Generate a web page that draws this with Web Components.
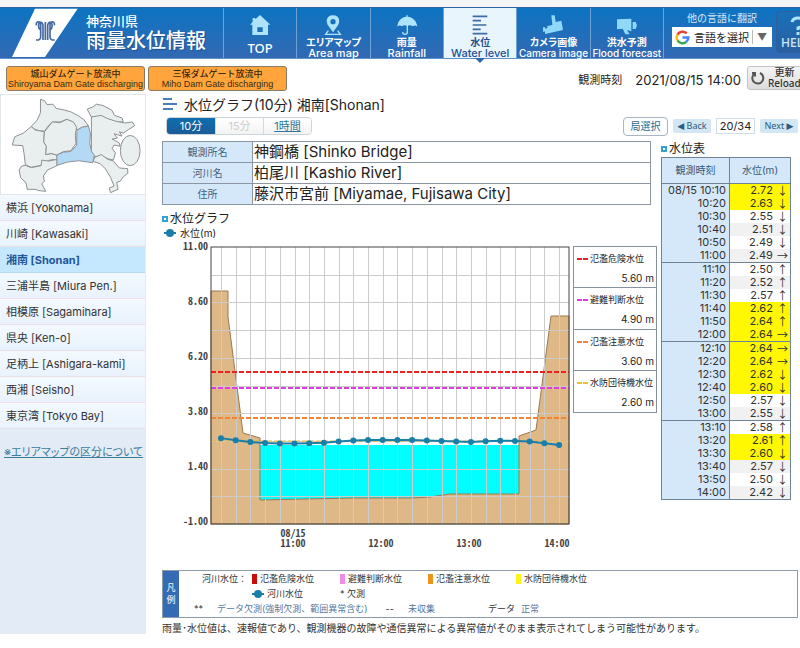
<!DOCTYPE html>
<html lang="ja">
<head>
<meta charset="utf-8">
<meta name="viewport" content="width=device-width, initial-scale=1">
<title>神奈川県 雨量水位情報</title>
<style>
  body { margin: 0; background: #fff; color: #222; font-family: Inter, "Noto Sans CJK JP", sans-serif; font-size: 11px; overflow-x: hidden; }
</style>
</head>
<body>
<river-app></river-app>

<script>
const define = (name, html, init) => {
  const tpl = document.createElement('template');
  tpl.innerHTML = html;
  customElements.define(name, class extends HTMLElement {
    connectedCallback() {
      if (this.shadowRoot) return;
      this.attachShadow({ mode: 'open' }).append(tpl.content.cloneNode(true));
      if (init) init(this, this.shadowRoot);
    }
  });
};

/* One tab of the main navigation */
define('nav-tab', `
<style>
  :host { display: block; border-left: 1px solid #6fa3d6; position: relative; min-width: 0; }
  :host([active]) { background: #e9f5fd; }
  a { display: flex; flex-direction: column; align-items: center; height: 100%; box-sizing: border-box; padding-top: 6px; color: #fff; text-decoration: none; white-space: nowrap; font-weight: 500; }
  :host([active]) a { color: #24508f; }
  .ja { font-size: 10px; line-height: 12px; font-feature-settings: "palt"; font-weight: 700; }
  .en { font-size: 11px; line-height: 10px; }
  :host([plain]) .ja { display: none; }
  :host([plain]) .en { font-size: 13px; line-height: 16px; margin-top: 4px; font-family: "Noto Sans", sans-serif; }
  :host([small]) .en { font-size: 10px; }
  .arrow { display: none; position: absolute; left: 50%; top: 100%; margin-left: -5px; border: 5px solid transparent; border-top-color: #2e67ab; border-bottom: 0; }
  :host([active]) .arrow { display: block; }
</style>
<a href="#"><slot name="icon"></slot><span class="ja"><slot name="ja"></slot></span><span class="en"><slot></slot></span></a>
<i class="arrow"></i>`);

define('site-header', `
<style>
  :host { display: flex; height: 52px; margin-top: 7px; box-sizing: border-box; border-top: 1px solid #28649e; border-bottom: 1px solid #5d93cd; background: linear-gradient(#0c74c2, #3369b3); color: #fff; box-shadow: 0 -7px #f6f6f6; }
  .brand { flex: 0 0 223px; display: flex; gap: 8px; align-items: center; }
  .brand > svg { flex: none; margin-left: 12px; }
  .brand small { display: block; font-size: 13px; line-height: 16px; font-weight: 500; }
  .brand b { display: block; font-size: 20px; line-height: 25px; font-weight: 500; text-shadow: 1px 1px 1px #204f8c; white-space: nowrap; }
  nav { flex: 0 0 440px; display: grid; grid-template-columns: repeat(6, minmax(0, 1fr)); }
  nav svg { width: 24px; height: 22px; display: block; }
  .lang { flex: 0 0 100px; border-left: 1px solid #6fa3d6; padding: 3px 4px 0 8px; font-size: 10px; text-align: center; }
  .lang label { display: block; line-height: 15px; color: #d9eafa; padding-right: 0; }
  .pick { display: flex; align-items: center; height: 20px; background: #fff; margin-top: 1px; padding: 0 3px; position: relative; }
  .pick svg { flex: none; }
  select { appearance: none; flex: 1; min-width: 0; border: 0; background: none; font: 11px "Noto Sans CJK JP", sans-serif; color: #222; padding: 0 0 0 4px; height: 20px; }
  .tri { border-left: 1px solid #bbb; padding: 0 2px 0 4px; line-height: 14px; color: #666; font-size: 10px; }
  .help { flex: 0 0 74px; margin: 3px 0 5px; border: 1px solid #2b5f9d; border-radius: 4px; background: linear-gradient(#1a6fb9, #2a5f9f); color: #cfe8fb; padding: 0; font: 500 12px/14px "Noto Sans", sans-serif; }
  .help svg { display: block; margin: 1px 0 0 13px; }
  .help span { display: block; text-align: left; padding-left: 4px; }
</style>
<div class="brand">
  <svg width="66" height="50" viewBox="38 26 198 150"><path d="M107 28H235L137 173H38Z" fill="#fff"/>
    <g fill="none" stroke="#4568a3" stroke-width="5"><path d="M111 78C108 66 124 63 124 76V112Q124 123 110 122M165 78C168 66 152 63 152 76V112Q152 123 166 122M131 122V80C131 64 115 66 118 82C119 94 126 91 124 88M145 122V80C145 64 161 66 158 82C157 94 150 91 152 88M138 68V122"/></g></svg>
  <div><small>神奈川県</small><b>雨量水位情報</b></div>
</div>
<nav>
  <nav-tab plain><svg slot="icon" viewBox="743 44 72 66"><path fill="#aee4fb" fill-rule="evenodd" d="M779 47L810 76H803V107H756V76H749L757 68V56H765V60ZM771 84V98H787V84Z"/></svg>TOP</nav-tab>
  <nav-tab><svg slot="icon" viewBox="93 44 72 66"><path fill="#aee4fb" fill-rule="evenodd" d="M129 48C151 48 151 70 142 81L129 99L116 81C107 70 107 48 129 48ZM129 59A8 8 0 1 0 129 75A8 8 0 1 0 129 59Z"/><path fill="none" stroke="#aee4fb" stroke-width="4" d="M115 94L107 105H151L143 94"/></svg><span slot="ja">エリアマップ</span>Area map</nav-tab>
  <nav-tab><svg slot="icon" viewBox="313 44 72 66"><path fill="#aee4fb" d="M347 48H351V52C368 53 378 66 380 82Q374 75 366 81Q358 75 350 81Q342 75 334 81Q326 75 320 82C321 66 331 53 347 52Z"/><path fill="none" stroke="#aee4fb" stroke-width="4" d="M350 78V99Q350 105 343 105Q336 105 336 98"/></svg><span slot="ja">雨量</span>Rainfall</nav-tab>
  <nav-tab active><svg slot="icon" viewBox="531 44 72 66"><path stroke="#3d6ba5" stroke-width="5" d="M545 51H589M545 64H570M545 77H586M545 90H569M545 103H589"/></svg><span slot="ja">水位</span>Water level</nav-tab>
  <nav-tab small><svg slot="icon" viewBox="9 44 72 66"><path fill="#8fd8fa" d="M40 48H50L53 68L70 64L75 92L22 104L20 96L15 98V84L20 83L22 88L28 86V80L43 77Z"/></svg><span slot="ja">カメラ画像</span>Camera image</nav-tab>
  <nav-tab small><svg slot="icon" viewBox="226 44 72 66"><path fill="#8fd8fa" d="M232 60L275 58V96L262 92L270 105H257L249 88L232 90ZM279 68H288L292 78L288 89H279Z"/></svg><span slot="ja">洪水予測</span>Flood forecast</nav-tab>
</nav>
<div class="lang">
  <label for="lang">他の言語に翻訳</label>
  <div class="pick">
    <svg width="15" height="15" viewBox="0 0 18 18"><g fill="none" stroke-width="3"><path stroke="#ea4335" d="M3 5.5A7 7 0 0 1 14 4"/><path stroke="#fbbc05" d="M3 12.5A7 7 0 0 1 3 5.5"/><path stroke="#34a853" d="M13.500 14.300A7 7 0 0 1 3 12.500"/><path stroke="#4285f4" d="M9 9H16A7 7 0 0 1 13.500 14.300"/></g></svg>
    <select id="lang"><option>言語を選択</option></select><span class="tri">▼</span>
  </div>
</div>
<button class="help"><svg width="18" height="20" viewBox="0 0 18 20"><path d="M2 6Q3 2 8 2Q14 2 14 7Q14 10 8 12V14M8 16V19" fill="none" stroke="#aee4fb" stroke-width="3"/></svg><span>HELP</span></button>`);

define('status-bar', `
<style>
  :host { display: flex; height: 35px; padding: 7px 0 0 6px; box-sizing: border-box; gap: 3px; align-items: flex-start; overflow: hidden; }
  a { flex: 0 0 139px; min-width: 0; height: 25px; box-sizing: border-box; border: 1px solid #8b7a63; border-radius: 3px; background: #ffa53c; color: #3b2a10; text-decoration: none; text-align: center; font: 500 9px/11px "Noto Sans CJK JP", sans-serif; padding-top: 1px; white-space: nowrap; }
  a span { display: block; font-family: "Liberation Sans", sans-serif; line-height: 10px; }
  .time { margin-left: auto; display: flex; gap: 13px; line-height: 28px; font-size: 11px; white-space: nowrap; }
  time { font-size: 13px; }
  button { flex: 0 0 60px; height: 24px; margin: 0 -7px 0 3px; border: 1px solid #c4c4c4; border-radius: 3px; background: linear-gradient(#f5f5f5, #dcdcdc); display: flex; gap: 3px; align-items: center; padding: 0 0 0 3px; font: 500 10px/11px "Noto Sans", "Noto Sans CJK JP", sans-serif; color: #333; }
</style>
<a href="#">城山ダムゲート放流中<span>Shiroyama Dam Gate discharging</span></a>
<a href="#">三保ダムゲート放流中<span>Miho Dam Gate discharging</span></a>
<div class="time"><span>観測時刻</span><time>2021/08/15 14:00</time></div>
<button><svg width="14" height="14" viewBox="0 0 14 14"><path d="M9 2A5.500 5.500 0 1 1 3 3M1 2L4 2L4 5.500" fill="none" stroke="#555" stroke-width="2"/></svg><span>更新<br>Reload</span></button>`);

define('area-menu', `
<style>
  :host { display: block; background: #e3ebf6; flex: 0 0 146px; box-sizing: border-box; }
  .map { display: block; width: 100%; background: #fff; box-sizing: border-box; border: 1px solid #e3e6ea; }
  nav { display: block; margin-right: 1px; }
  nav a { display: block; height: 26px; box-sizing: border-box; padding-left: 6px; line-height: 27px; border-bottom: 1px solid #eadfe6; background: linear-gradient(#f3f9ff, #e9f2fc); color: #333; text-decoration: none; white-space: nowrap; font-size: 11px; }
  nav a.on { background: #c5e8fe; color: #24569c; font-weight: 700; border-color: #b9d9ee; }
  .note { display: block; margin: 15px 0 0 4px; font-size: 11px; line-height: 16px; color: #3a7e9c; white-space: nowrap; font-feature-settings: "palt"; }
</style>
<svg class="map" viewBox="0 12 438 300">
  <g fill="#e9eeee" stroke="#8b8f92" stroke-width="3" stroke-linejoin="round">
    <path d="M120 25L132 29L140 41L158 40L168 53L190 57L212 63L235 75L252 87L266 106L247 110L231 119L220 95L200 86L180 94L156 94L144 106L132 122L116 121L103 116L92 108L110 88L120 66Z"/>
    <path d="M92 108L103 118L132 124L130 155L138 168L136 193L153 190L170 195L172 215L160 208L145 211L122 226L92 232L74 224L70 190L66 166L34 164L42 139L68 128Z"/>
    <path d="M132 124L156 94L180 96L200 86L220 94L230 110L226 134L228 160L212 182L190 184L170 195L153 190L136 193L138 168L130 155Z"/>
    <path d="M74 226L92 233L122 227L124 210L145 213L170 208L172 226L142 240L129 258L132 275L124 282L136 305L116 303L104 299L80 299L76 279L60 264L55 240L63 228Z"/>
    <path d="M262 55L280 48L290 40L310 44L337 58L345 74L368 82L372 94L345 95L325 85L304 78L275 79L262 55Z"/>
    <path d="M275 79L304 74L325 84L350 92L376 97L400 94L406 106L388 117L372 128L360 124L368 137L344 130L354 143L338 146L360 158L362 168L344 164L338 175L348 188L342 210L325 206L305 196L285 200L275 186Z"/>
    <path d="M285 202L305 193L325 208L341 212L360 234L385 236L386 250L372 261L363 274L352 278L356 299L333 309L329 295L344 289L333 262L318 237L302 221L280 214Z"/>
    <ellipse cx="393" cy="181" rx="30" ry="46"/>
    <path fill="#b4d9f5" d="M247 110L266 106L272 130L270 160L276 185L284 195L279 218L236 212L202 216L170 226L170 194L190 186L212 184L230 166L231 119Z"/>
  </g>
</svg>
<nav></nav>
<a class="note" href="#">※エリアマップの区分について</a>`, (h, r) => {
  const areas = ['横浜 [Yokohama]', '川崎 [Kawasaki]', '湘南 [Shonan]', '三浦半島 [Miura Pen.]', '相模原 [Sagamihara]', '県央 [Ken-o]', '足柄上 [Ashigara-kami]', '西湘 [Seisho]', '東京湾 [Tokyo Bay]'];
  r.querySelector('nav').innerHTML = areas.map((a, i) => `<a href="#"${i === 2 ? ' class="on" aria-current="page"' : ''}>${a}</a>`).join('');
});

define('graph-toolbar', `
<style>
  :host { display: block; }
  h1 { display: flex; align-items: center; gap: 6px; margin: 0; font-size: 14px; line-height: 20px; font-weight: 400; white-space: nowrap; }
  .row { display: flex; justify-content: space-between; align-items: center; margin-top: 2px; height: 18px; }
  .seg { display: flex; margin-left: 4px; border: 1px solid #ccd3d9; border-radius: 4px; height: 18px; box-sizing: border-box; overflow: hidden; }
  .seg > * { width: 48px; border: 0; padding: 0; text-align: center; font: 11px/16px Inter, "Noto Sans CJK JP", sans-serif; background: linear-gradient(#fff, #f3f3f3); box-sizing: border-box; color: #333; }
  .seg > * + * { border-left: 1px solid #d5d9dc; }
  .seg .on { background: linear-gradient(#0f6eae, #1b5c98); color: #fff; }
  .seg :disabled { color: #ccc; }
  .seg a { color: #2e7596; }
  .pager { display: flex; gap: 5px; align-items: center; }
  .pager > * { box-sizing: border-box; text-align: center; white-space: nowrap; padding: 0; }
  .station { width: 45px; height: 19px; border: 1px solid #a9b6c3; border-radius: 4px; background: #fbfdff; color: #2e6a88; font: 10px/16px "Noto Sans CJK JP", sans-serif; }
  .step { width: 38px; height: 14px; border: 0; border-radius: 2px; background: #d3e6f3; color: #2b5a80; font: 9px/14px "Noto Sans", "DejaVu Sans", sans-serif; }
  .count { width: 39px; height: 16px; border: 1px solid #cfdde8; font-size: 11px; line-height: 14px; }
</style>
<h1><svg width="16" height="16" viewBox="0 0 16 16"><path d="M1 2H10M1 7H15M1 12H11" stroke="#4a7db3" stroke-width="2"/></svg><span>水位グラフ(10分) 湘南[Shonan]</span></h1>
<div class="row">
  <div class="seg"><button class="on">10分</button><button disabled>15分</button><a href="#">1時間</a></div>
  <div class="pager"><button class="station">局選択</button><button class="step">◀ Back</button><span class="count">20/34</span><button class="step">Next ▶</button></div>
</div>`);

define('station-info', `
<style>
  :host { display: block; margin-right: 6px; }
  table { width: 100%; border-collapse: collapse; table-layout: fixed; }
  th, td { border: 1px solid #8c96a3; height: 20px; padding: 0; box-sizing: border-box; }
  th { width: 90px; background: #d5e8f9; color: #3d5f80; font-size: 10px; line-height: 20px; font-weight: 400; }
  td { font-size: 15px; line-height: 20px; padding-left: 1px; white-space: nowrap; color: #222; }
</style>
<table>
  <tr><th scope="row">観測所名</th><td>神鋼橋 [Shinko Bridge]</td></tr>
  <tr><th scope="row">河川名</th><td>柏尾川 [Kashio River]</td></tr>
  <tr><th scope="row">住所</th><td>藤沢市宮前 [Miyamae, Fujisawa City]</td></tr>
</table>`);

define('section-title', `
<style>
  :host { display: flex; align-items: center; gap: 2px; font-size: 12px; line-height: 16px; }
  i { width: 6px; height: 6px; box-sizing: border-box; border: 2px solid #35a2d2; }
</style><i></i><slot></slot>`);

const LEVELS = [2.72, 2.63, 2.55, 2.51, 2.49, 2.49, 2.50, 2.52, 2.57, 2.62, 2.64, 2.64, 2.64, 2.64, 2.62, 2.60, 2.57, 2.55, 2.58, 2.61, 2.60, 2.57, 2.50, 2.42];
const TRENDS = '↓↓↓↓↓→↑↑↑↑↑→→→↓↓↓↓↑↑↓↓↓↓';

/* Cross section of the river bed with the level series over it */
define('level-chart', `
<style>
  :host { display: block; flex: 1 1 0; min-width: 0; }
  svg { display: block; width: 100%; overflow: visible; }
  text { font-family: "Noto Sans Mono CJK JP", "Liberation Mono", monospace; font-size: 10px; font-weight: 700; fill: #444; }
</style>
<svg viewBox="0 0 410 308" role="img" aria-label="水位グラフ"></svg>`, (h, r) => {
  const L = 49, R = 407, T = 7, B = 284;
  const y = v => T + (11 - v) * (B - T) / 12;
  const x = i => 59 + i * 14.7;
  let s = '<path fill="#0ff" d="M98 205H357V254H290L268 258L98 260Z"/>';
  s += `<path fill="#deb887" stroke="#9c7850" d="M${L} 51H66V77L81 193L98 198V260L190 258H250L268 257L288 254H357V196L374 190L389 76H${R}V${B}H${L}Z"/>`;
  for (let i = 0; i < 24; i++) s += `<path stroke="#ccc" d="M${Math.round(x(i)) + .5} ${T}V${B}"/>`;
  for (let i = 1; i < 10; i++) s += `<path stroke="#ccc" d="M${L} ${Math.round(T + i * 27.7) + .5}H${R}"/>`;
  [[5.6, '#f02020', 2], [4.9, '#dd3ddd', 2], [3.6, '#f08437', 2], [2.6, '#ecb431', 1]].forEach(([v, c, w]) => {
    s += `<path stroke="${c}" stroke-width="${w}" stroke-dasharray="5 2" d="M${L} ${Math.round(y(v))}H${R}"/>`;
  });
  s += `<rect x="${L}" y="${T}" width="${R - L}" height="${B - T}" fill="none" stroke="#444"/>`;
  s += `<polyline fill="none" stroke="#1a7fa8" stroke-width="2" points="${LEVELS.map((v, i) => x(i) + ',' + y(v)).join(' ')}"/>`;
  LEVELS.forEach((v, i) => { s += `<circle cx="${x(i)}" cy="${y(v)}" r="3" fill="#1a7fa8"/>`; });
  ['11.00', '8.60', '6.20', '3.80', '1.40', '-1.00'].forEach((t, i) => { s += `<text x="46" y="${10 + i * 55}" text-anchor="end">${t}</text>`; });
  s += '<text x="131" y="297" text-anchor="middle">08/15</text>';
  ['11:00', '12:00', '13:00', '14:00'].forEach((t, i) => { s += `<text x="${131 + i * 88}" y="307" text-anchor="middle">${t}</text>`; });
  r.querySelector('svg').innerHTML = s;
});

define('threshold-list', `
<style>
  :host { display: block; flex: 0 0 84px; margin-top: 6px; }
  dl { margin: 0; border: 1px solid #8791a0; border-bottom: 0; }
  div { border-bottom: 1px solid #8791a0; height: 41px; box-sizing: border-box; padding: 4px 2px 0 3px; }
  div:nth-child(even) { height: 42px; }
  dt { display: flex; align-items: center; gap: 2px; font-size: 9px; line-height: 16px; white-space: nowrap; }
  dt svg { flex: none; }
  dd { margin: 2px 0 0; text-align: right; font: 10px/18px Inter, sans-serif; }
</style><dl></dl>`, (h, r) => {
  r.querySelector('dl').innerHTML = [['氾濫危険水位', '5.60', '#f02020'], ['避難判断水位', '4.90', '#dd3ddd'], ['氾濫注意水位', '3.60', '#f08437'], ['水防団待機水位', '2.60', '#ecc030']]
    .map(([n, v, c]) => `<div><dt><svg width="11" height="2"><path d="M0 1H11" stroke="${c}" stroke-width="2" stroke-dasharray="5 1"/></svg>${n}</dt><dd>${v} m</dd></div>`).join('');
});

define('level-table', `
<style>
  :host { display: block; }
  table { width: 100%; border-collapse: collapse; border: 1px solid #6f8398; font-size: 11px; line-height: 13px; }
  th { background: #d5e8f9; color: #31587c; font-weight: 400; font-size: 10px; height: 25px; padding: 0; border: 1px solid #6f8398; }
  td { padding: 0 1px 0 0; height: 13px; text-align: right; vertical-align: top; white-space: nowrap; color: #333; }
  td:first-child { background: #d5e8f9; border-right: 1px solid #6f8398; width: 64px; padding-right: 3px; }
  tr:nth-child(even) td + td { background: #f1f1f1; }
  tr.hi td + td { background: #fff800; }
  tbody tr:nth-child(6n+1) td { border-top: 1px solid #6f8398; }
  i { display: inline-block; vertical-align: top; width: 13px; text-align: center; font: 11px/13px "Noto Sans CJK JP", sans-serif; }
</style>
<table><thead><tr><th>観測時刻</th><th>水位(m)</th></tr></thead><tbody></tbody></table>`, (h, r) => {
  r.querySelector('tbody').innerHTML = LEVELS.map((v, i) => {
    const m = 610 + i * 10, t = Math.floor(m / 60) + ':' + String(m % 60).padStart(2, '0');
    return `<tr${v >= 2.6 ? ' class="hi"' : ''}><td>${i ? '' : '08/15 '}${t}</td><td>${v.toFixed(2)} <i>${TRENDS[i]}</i></td></tr>`;
  }).join('');
});

define('level-marker', `
<style>:host { display: inline-flex; } svg { display: block; }</style>
<svg width="12" height="8" viewBox="0 0 12 8"><path d="M0 4H12" stroke="#1a7fa8" stroke-width="2"/><circle cx="6" cy="4" r="4" fill="#1a7fa8"/></svg>`);

/* Legend under the chart */
define('chart-key', `
<style>
  :host { display: flex; border: 1px solid #8d9aa7; height: 48px; box-sizing: border-box; font-size: 9px; color: #333; margin-top: 22px; }
  h2 { flex: 0 0 16px; box-sizing: border-box; margin: 0; background: #356bb5; color: #fff; font-size: 9px; line-height: 12px; font-weight: 400; display: flex; flex-direction: column; justify-content: center; align-items: center; }
  .body { flex: 1; min-width: 0; white-space: nowrap; }
  .row { display: grid; grid-template-columns: 68px repeat(4, 88px); line-height: 15px; column-gap: 0; }
  .row > :first-child { text-align: right; }
  .row span, .row b { display: flex; align-items: center; gap: 3px; padding-left: 5px; font-weight: 400; }
  .row b { justify-content: flex-end; padding: 0; }
  i { width: 5px; height: 10px; background: var(--c); }
  .flags { display: flex; line-height: 16px; color: #56789f; padding-left: 15px; }
  .flags span { padding-right: 18px; }
  .flags .k { color: #333; padding-right: 14px; }
  .flags .d { padding: 0 6px 0 35px; }
</style>
<h2><span>凡</span><span>例</span></h2>
<div class="body">
  <div class="row"><b>河川水位：</b><span><i style="--c:#c60c0c"></i>氾濫危険水位</span><span><i style="--c:#f08be6"></i>避難判断水位</span><span><i style="--c:#e8971c"></i>氾濫注意水位</span><span><i style="--c:#fff31a"></i>水防団待機水位</span></div>
  <div class="row"><b></b><span><level-marker></level-marker>河川水位</span><span>* 欠測</span></div>
  <div class="flags"><span class="k">**</span><span>データ欠測(強制欠測、範囲異常含む)</span><span class="k">--</span><span>未収集</span><span class="k d">データ</span><span>正常</span></div>
</div>`);

define('river-app', `
<style>
  :host { display: block; overflow: hidden; }
  .cols { display: flex; align-items: stretch; }
  main { flex: 1; min-width: 0; padding: 1px 2px 0 16px; }
  .panels { display: flex; gap: 4px; margin: 6px 7px 0 0; }
  .left { flex: 1; min-width: 0; }
  .right { flex: 0 0 130px; }
  .left section-title { margin-top: 6px; }
  .unit { display: flex; align-items: center; gap: 4px; margin: 0 0 1px 2px; font-size: 10px; line-height: 12px; }
  .plot { display: flex; gap: 1px; align-items: flex-start; }
  .note { margin: 4px 0 0; font-size: 10px; line-height: 12px; color: #333; }
</style>
<site-header></site-header>
<status-bar></status-bar>
<div class="cols">
  <area-menu></area-menu>
  <main>
    <graph-toolbar></graph-toolbar>
    <div class="panels">
      <div class="left">
        <station-info></station-info>
        <section-title>水位グラフ</section-title>
        <div class="unit"><level-marker></level-marker>水位(m)</div>
        <div class="plot"><level-chart></level-chart><threshold-list></threshold-list></div>
      </div>
      <div class="right"><section-title>水位表</section-title><level-table></level-table></div>
    </div>
    <chart-key></chart-key>
    <p class="note">雨量･水位値は、速報値であり、観測機器の故障や通信異常による異常値がそのまま表示されてしまう可能性があります。</p>
  </main>
</div>`);
</script>
</body>
</html>
